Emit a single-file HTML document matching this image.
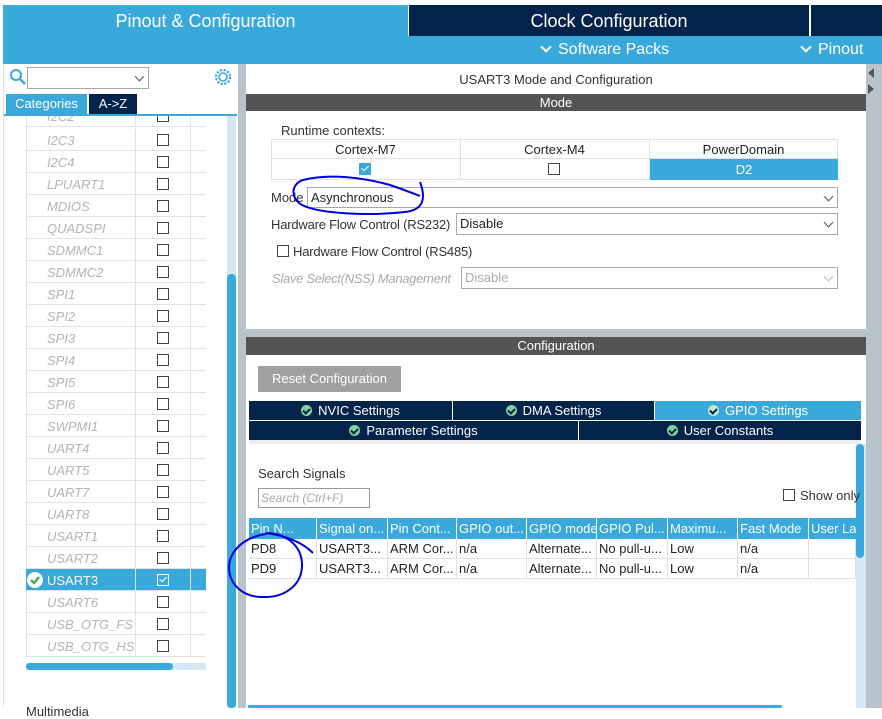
<!DOCTYPE html>
<html><head><meta charset="utf-8"><style>
*{box-sizing:border-box;margin:0;padding:0}
body{width:882px;height:708px;overflow:hidden;background:#fff;font-family:"Liberation Sans",sans-serif;position:relative;font-size:12px;color:#222}
.a{position:absolute}
.cb{position:absolute;width:12px;height:12px;border:1px solid #444;background:#fff}
.lrow{position:absolute;left:26px;width:180px;height:22px;border-bottom:1px solid #e2e2e2}
.lrow .n{position:absolute;left:21px;top:4px;font-style:italic;color:#b4b4b4;font-size:13px}
.lrow .c1{position:absolute;left:109px;top:0;width:1px;height:22px;background:#e2e2e2}
.lrow .c2{position:absolute;left:164px;top:0;width:1px;height:22px;background:#e2e2e2}
.lrow .cb{left:131px;top:5px}
.sel{position:absolute;border:1px solid #a8a8a8;background:#fff;height:21px;padding:2px 3px;font-size:13px}
.chev{position:absolute;right:5px;top:5px;width:7px;height:7px;border-right:1px solid #555;border-bottom:1px solid #555;transform:rotate(45deg)}
.tab{position:absolute;height:19px;background:#03234b;color:#fff;text-align:center;font-size:13px;line-height:19px}
.ok{display:inline-block;width:11px;height:11px;border-radius:50%;background:#7fd0a0;vertical-align:-1px;margin-right:6px;position:relative}
.ok:after{content:"";position:absolute;left:3px;top:2px;width:3px;height:5px;border-right:2px solid #03234b;border-bottom:2px solid #03234b;transform:rotate(45deg)}
.th{position:absolute;top:518px;height:21px;background:#39a9db;color:#fff;font-size:13px;line-height:21px;padding-left:2px;overflow:hidden;white-space:nowrap}
.td{position:absolute;height:20px;font-size:13px;line-height:20px;padding-left:2px;white-space:nowrap;border-right:1px solid #e0e0e0;border-bottom:1px solid #e0e0e0}
</style></head><body>
<div class="a" style="left:3px;top:5px;width:405px;height:59px;background:#39a9db"></div>
<div class="a" style="left:3px;top:5px;width:405px;height:31px;color:#fff;font-size:18px;line-height:33px;text-align:center">Pinout &amp; Configuration</div>
<div class="a" style="left:409px;top:5px;width:400px;height:31px;background:#03234b;color:#fff;font-size:18px;line-height:33px;text-align:center">Clock Configuration</div>
<div class="a" style="left:811px;top:5px;width:71px;height:31px;background:#03234b"></div>
<div class="a" style="left:408px;top:36px;width:474px;height:28px;background:#39a9db"></div>
<div class="a" style="left:540px;top:41px;color:#fff;font-size:16px;white-space:nowrap"><span style="display:inline-block;width:8px;height:8px;border-right:2px solid #fff;border-bottom:2px solid #fff;transform:rotate(45deg);margin:0 8px 3px 2px"></span>Software Packs</div>
<div class="a" style="left:800px;top:41px;color:#fff;font-size:16px;white-space:nowrap"><span style="display:inline-block;width:8px;height:8px;border-right:2px solid #fff;border-bottom:2px solid #fff;transform:rotate(45deg);margin:0 8px 3px 2px"></span>Pinout</div>

<div class="a" style="left:3px;top:64px;width:1px;height:644px;background:#e4e4e4"></div>
<svg class="a" style="left:9px;top:68px" width="18" height="18"><circle cx="7" cy="7" r="5" fill="none" stroke="#39a9db" stroke-width="2"/><line x1="11" y1="11" x2="16" y2="16" stroke="#39a9db" stroke-width="2.4"/></svg>
<div class="sel" style="left:27px;top:67px;width:122px;height:22px"><div class="chev" style="top:5px"></div></div>
<svg class="a" style="left:214px;top:68px" width="18" height="18"><circle cx="9" cy="9" r="4" fill="none" stroke="#39a9db" stroke-width="1.6"/><circle cx="9" cy="9" r="7" fill="none" stroke="#39a9db" stroke-width="2.2" stroke-dasharray="2.2 1.5"/></svg>
<div class="a" style="left:6px;top:94px;width:81px;height:20px;background:#39a9db;color:#fff;font-size:13px;line-height:19px;text-align:center">Categories</div>
<div class="a" style="left:89px;top:94px;width:48px;height:20px;background:#03234b;color:#fff;font-size:13px;line-height:19px;text-align:center">A-&gt;Z</div>
<div class="a" style="left:4px;top:114px;width:233px;height:2px;background:#39a9db"></div>
<div class="a" style="left:26px;top:116px;width:1px;height:542px;background:#e2e2e2"></div>
<div id="rows"></div>
<div class="a" style="left:227px;top:116px;width:9px;height:592px;background:#d6e6f2"></div>
<div class="a" style="left:227px;top:274px;width:9px;height:434px;background:#39a9db;border-radius:4px"></div>
<div class="a" style="left:26px;top:663px;width:180px;height:7px;background:#d6e6f2"></div>
<div class="a" style="left:26px;top:663px;width:147px;height:7px;background:#39a9db;border-radius:4px"></div>
<div class="a" style="left:26px;top:704px;font-size:13px;color:#333">Multimedia</div>
<div class="a" style="left:238px;top:64px;width:8px;height:644px;background:#b8c4cc"></div>

<div class="a" style="left:866px;top:64px;width:16px;height:644px;background:#b8c4cc"></div>
<div class="a" style="left:868px;top:68px;width:0;height:0;border:5px solid transparent;border-right:6px solid #555;border-left:0"></div>
<div class="a" style="left:868px;top:84px;width:0;height:0;border:5px solid transparent;border-left:6px solid #555;border-right:0"></div>
<div class="a" style="left:246px;top:72px;width:620px;text-align:center;font-size:13px;color:#333">USART3 Mode and Configuration</div>
<div class="a" style="left:246px;top:94px;width:620px;height:17px;background:#545454;color:#fff;text-align:center;font-size:13px;line-height:17px">Mode</div>
<div class="a" style="left:281px;top:123px;font-size:13px;color:#333">Runtime contexts:</div>
<div class="a" style="left:271px;top:139px;width:567px;height:41px;border:1px solid #e0e0e0"></div>
<div class="a" style="left:271px;top:158px;width:567px;height:1px;background:#e0e0e0"></div>
<div class="a" style="left:460px;top:139px;width:1px;height:41px;background:#e0e0e0"></div>
<div class="a" style="left:649px;top:139px;width:1px;height:41px;background:#e0e0e0"></div>
<div class="a" style="left:271px;top:142px;width:189px;text-align:center;font-size:13px">Cortex-M7</div>
<div class="a" style="left:460px;top:142px;width:189px;text-align:center;font-size:13px">Cortex-M4</div>
<div class="a" style="left:649px;top:142px;width:189px;text-align:center;font-size:13px">PowerDomain</div>
<div class="a" style="left:359px;top:163px;width:12px;height:12px;background:#39a9db"><div style="position:absolute;left:4px;top:1px;width:4px;height:7px;border-right:1.5px solid #fff;border-bottom:1.5px solid #fff;transform:rotate(45deg)"></div></div>
<div class="cb" style="left:548px;top:163px"></div>
<div class="a" style="left:650px;top:159px;width:188px;height:21px;background:#39a9db;color:#fff;text-align:center;font-size:13px;line-height:21px">D2</div>
<div class="a" style="left:271px;top:190px;font-size:13px;color:#333">Mode</div>
<div class="sel" style="left:307px;top:187px;width:531px">Asynchronous<div class="chev"></div></div>
<div class="a" style="left:271px;top:217px;font-size:13px;color:#333;letter-spacing:-0.2px">Hardware Flow Control (RS232)</div>
<div class="sel" style="left:456px;top:213px;width:382px;height:22px">Disable<div class="chev"></div></div>
<div class="cb" style="left:277px;top:245px"></div>
<div class="a" style="left:293px;top:244px;font-size:13px;color:#333;letter-spacing:-0.2px">Hardware Flow Control (RS485)</div>
<div class="a" style="left:272px;top:271px;font-size:13px;color:#aaa;font-style:italic;letter-spacing:-0.3px">Slave Select(NSS) Management</div>
<div class="sel" style="left:461px;top:267px;width:377px;height:22px;color:#aaa">Disable<div class="chev" style="border-color:#bbb"></div></div>
<div class="a" style="left:246px;top:329px;width:620px;height:8px;background:#b8c4cc"></div>

<div class="a" style="left:246px;top:337px;width:620px;height:18px;background:#545454;color:#fff;text-align:center;font-size:13px;line-height:18px">Configuration</div>
<div class="a" style="left:258px;top:366px;width:143px;height:26px;background:#a0a0a0;color:#fff;font-size:13px;line-height:26px;text-align:center">Reset Configuration</div>
<div class="tab" style="left:249px;top:401px;width:203px"><span class="ok"></span>NVIC Settings</div>
<div class="tab" style="left:453px;top:401px;width:201px"><span class="ok"></span>DMA Settings</div>
<div class="tab" style="left:655px;top:401px;width:206px;background:#39a9db"><span class="ok" style="background:#bfe8cf"></span>GPIO Settings</div>
<div class="tab" style="left:249px;top:421px;width:329px"><span class="ok"></span>Parameter Settings</div>
<div class="tab" style="left:579px;top:421px;width:282px"><span class="ok"></span>User Constants</div>
<div class="a" style="left:249px;top:440px;width:612px;height:4px;background:#eee"></div>
<div class="a" style="left:856px;top:444px;width:10px;height:264px;background:#d6e6f2"></div>
<div class="a" style="left:856px;top:444px;width:8px;height:114px;background:#39a9db;border-radius:4px"></div>
<div class="a" style="left:258px;top:466px;font-size:13px;color:#333">Search Signals</div>
<div class="a" style="left:258px;top:488px;width:112px;height:20px;border:1px solid #999;font-size:12px;color:#aaa;font-style:italic;padding:2px 2px">Search (Ctrl+F)</div>
<div class="cb" style="left:783px;top:489px"></div>
<div class="a" style="left:800px;top:488px;font-size:13px;color:#333;white-space:nowrap">Show only</div>
<div class="th" style="left:249px;width:67px">Pin N...</div>
<div class="th" style="left:317px;width:70px">Signal on...</div>
<div class="th" style="left:388px;width:68px">Pin Cont...</div>
<div class="th" style="left:457px;width:69px">GPIO out...</div>
<div class="th" style="left:527px;width:69px">GPIO mode</div>
<div class="th" style="left:597px;width:70px">GPIO Pul...</div>
<div class="th" style="left:668px;width:69px">Maximu...</div>
<div class="th" style="left:738px;width:70px">Fast Mode</div>
<div class="th" style="left:809px;width:47px">User La</div>
<div id="trows"></div>
<div class="a" style="left:248px;top:705px;width:534px;height:3px;background:#39a9db;border-radius:2px"></div>

<svg class="a" style="left:0;top:0" width="882" height="708" fill="none" stroke="#0000e0" stroke-width="2">
<path d="M420,182 C426,198 424,210 405,212 C370,216 320,214 302,205 C290,198 291,184 303,180 C330,173 365,178 390,185 C402,189 412,193 420,196"/>
<path d="M266,534 C250,536 235,545 230,560 C225,580 240,597 262,597 C285,598 302,585 302,565 C302,545 285,533 266,533 C280,535 300,540 313,553"/>
</svg>
<script>
var names=["I2C2","I2C3","I2C4","LPUART1","MDIOS","QUADSPI","SDMMC1","SDMMC2","SPI1","SPI2","SPI3","SPI4","SPI5","SPI6","SWPMI1","UART4","UART5","UART7","UART8","USART1","USART2","USART3","USART6","USB_OTG_FS","USB_OTG_HS"];
var h="";names.forEach(function(n,i){var t=107+22*i;var s=n=="USART3";
h+='<div class="lrow" style="top:'+t+'px;'+(s?'background:#39a9db;':'')+(i==0?'height:11px;top:116px;overflow:hidden;':'')+'">'+
'<div class="n" style="'+(s?'color:#fff;font-style:normal;':'')+(i==0?'top:-7px;':'')+'">'+n+'</div><div class="c1"></div><div class="c2"></div>'+
'<div class="cb" style="'+(s?'background:#39a9db;border-color:#fff;':'')+(i==0?'top:-6px;':'')+'">'+(s?'<div style="position:absolute;left:3px;top:0;width:4px;height:7px;border-right:1.5px solid #fff;border-bottom:1.5px solid #fff;transform:rotate(45deg)"></div>':'')+'</div>'+
(s?'<svg style="position:absolute;left:0;top:2px" width="18" height="18"><circle cx="9" cy="9" r="8" fill="#fff"/><path d="M5 9 L8 12 L13 6" stroke="#3cae5c" stroke-width="2.4" fill="none"/></svg>':'')+'</div>';});
document.getElementById("rows").innerHTML=h;
var cols=[249,317,388,457,527,597,668,738,809,856];var rows=[["PD8","USART3...","ARM Cor...","n/a","Alternate...","No pull-u...","Low","n/a",""],["PD9","USART3...","ARM Cor...","n/a","Alternate...","No pull-u...","Low","n/a",""]];
var r="";rows.forEach(function(row,j){row.forEach(function(c,k){r+='<div class="td" style="left:'+cols[k]+'px;width:'+(cols[k+1]-cols[k])+'px;top:'+(539+20*j)+'px">'+c+'</div>';});});
document.getElementById("trows").innerHTML=r;
</script>
</body></html>
